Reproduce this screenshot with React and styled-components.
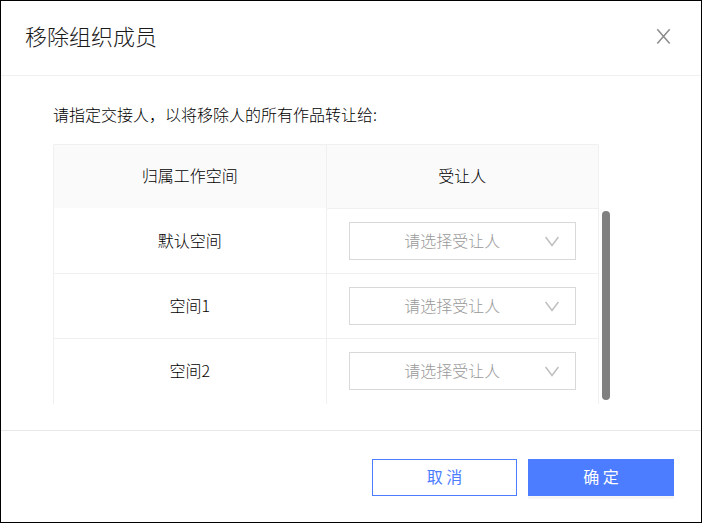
import React, { useState } from "react";
import styled, { createGlobalStyle } from "styled-components";

const GlobalStyle = createGlobalStyle`
  * {
    box-sizing: border-box;
  }
  body {
    margin: 0;
    background: #fff;
    font-family: "Noto Sans CJK SC", sans-serif;
    font-size: 16px;
    font-weight: 300;
    line-height: 24px;
    color: #000;
  }
`;

const Dialog = styled.div`
  display: flex;
  flex-direction: column;
  border: 1px solid #000;
  background: #fff;
`;

const Header = styled.header`
  display: flex;
  align-items: center;
  justify-content: space-between;
  padding: 16px 27px 22px 24px;
  border-bottom: 1px solid #f0f0f0;
`;

const Title = styled.h1`
  margin: 0;
  font-size: 22px;
  font-weight: 300;
  line-height: 36px;
  color: #1a1a1a;
`;

const CloseButton = styled.button`
  display: flex;
  padding: 0;
  border: none;
  background: none;
  color: #8c8c8c;
  cursor: pointer;
`;

const Body = styled.div`
  display: flex;
  flex-direction: column;
  gap: 18px;
  padding: 26px 91px 26px 52px;
`;

const Tip = styled.p`
  margin: 0;
`;

const TableArea = styled.div`
  display: flex;
  gap: 3px;
`;

const Table = styled.table`
  flex: 1;
  table-layout: fixed;
  border-collapse: separate;
  border-spacing: 0;
  border: 1px solid #f0f0f0;
  border-width: 1px 0 0 1px;
  border-radius: 2px 2px 0 0;
`;

const HeadCell = styled.th`
  width: ${({ $plain }) => ($plain ? "50%" : "auto")};
  height: 64px;
  padding: 0 22px 4px;
  font-weight: 300;
  background: #fafafa;
  border-right: 1px solid #f0f0f0;
  border-bottom: 1px solid ${({ $plain }) => ($plain ? "#fff" : "#f0f0f0")};
`;

const Cell = styled.td`
  height: 65px;
  padding: 0 22px ${({ $text }) => ($text ? "2px" : "0")};
  text-align: center;
  border-right: 1px solid #f0f0f0;
  border-bottom: 1px solid #f0f0f0;

  tr:last-child > & {
    border-bottom-color: #fff;
  }
`;

const SelectBox = styled.div`
  position: relative;
  display: flex;
`;

const Select = styled.select`
  appearance: none;
  width: 100%;
  height: 38px;
  padding: 0 32px 2px 12px;
  border: 1px solid #d9d9d9;
  border-radius: 0;
  background: #fff;
  color: #999;
  font: inherit;
  text-align: center;
  text-align-last: center;
`;

const Arrow = styled.svg`
  position: absolute;
  top: 14px;
  right: 17px;
  color: #bfbfbf;
  pointer-events: none;
`;

const ScrollThumb = styled.div`
  width: 8px;
  margin: 67px 0 4px;
  border-radius: 4px;
  background: #808080;
`;

const Footer = styled.footer`
  display: flex;
  justify-content: flex-end;
  gap: 11px;
  padding: 28px 27px 26px;
  border-top: 1px solid #e8e8e8;
`;

const Button = styled.button`
  width: ${({ $primary }) => ($primary ? "146px" : "145px")};
  height: 37px;
  padding: 0 0 4px;
  border: 1px solid #4c7cff;
  background: ${({ $primary }) => ($primary ? "#4c7cff" : "#fff")};
  color: ${({ $primary }) => ($primary ? "#fff" : "#4c7cff")};
  box-shadow: ${({ $primary }) =>
    $primary ? "0 3px 0 rgba(0, 0, 0, 0.04)" : "none"};
  font: inherit;
  font-weight: 400;
  cursor: pointer;
`;

const spaces = ["默认空间", "空间1", "空间2"];

const ReceiverSelect = ({ space }) => {
  const [value, setValue] = useState("");
  return (
    <SelectBox>
      <Select
        aria-label={space}
        value={value}
        onChange={(e) => setValue(e.target.value)}
      >
        <option value="">请选择受让人</option>
      </Select>
      <Arrow width="14" height="12" viewBox="0 0 14 12" fill="none">
        <path d="M0.6 1L7 9.4L13.4 1" stroke="currentColor" strokeWidth="1.5" />
      </Arrow>
    </SelectBox>
  );
};

const App = () => {
  return (
    <>
      <GlobalStyle />
      <Dialog role="dialog" aria-labelledby="title">
        <Header>
          <Title id="title">移除组织成员</Title>
          <CloseButton type="button" aria-label="关闭">
            <svg width="20" height="20" viewBox="0 0 20 20" fill="none">
              <path
                d="M3.3 4.2L15.7 18.6M15.7 4.2L3.3 18.6"
                stroke="currentColor"
                strokeWidth="1.5"
              />
            </svg>
          </CloseButton>
        </Header>
        <Body>
          <Tip>请指定交接人，以将移除人的所有作品转让给:</Tip>
          <TableArea>
            <Table>
              <thead>
                <tr>
                  <HeadCell $plain>归属工作空间</HeadCell>
                  <HeadCell>受让人</HeadCell>
                </tr>
              </thead>
              <tbody>
                {spaces.map((space) => (
                  <tr key={space}>
                    <Cell $text>{space}</Cell>
                    <Cell>
                      <ReceiverSelect space={space} />
                    </Cell>
                  </tr>
                ))}
              </tbody>
            </Table>
            <ScrollThumb />
          </TableArea>
        </Body>
        <Footer>
          <Button type="button">取 消</Button>
          <Button type="button" $primary>
            确 定
          </Button>
        </Footer>
      </Dialog>
    </>
  );
};

export default App;
